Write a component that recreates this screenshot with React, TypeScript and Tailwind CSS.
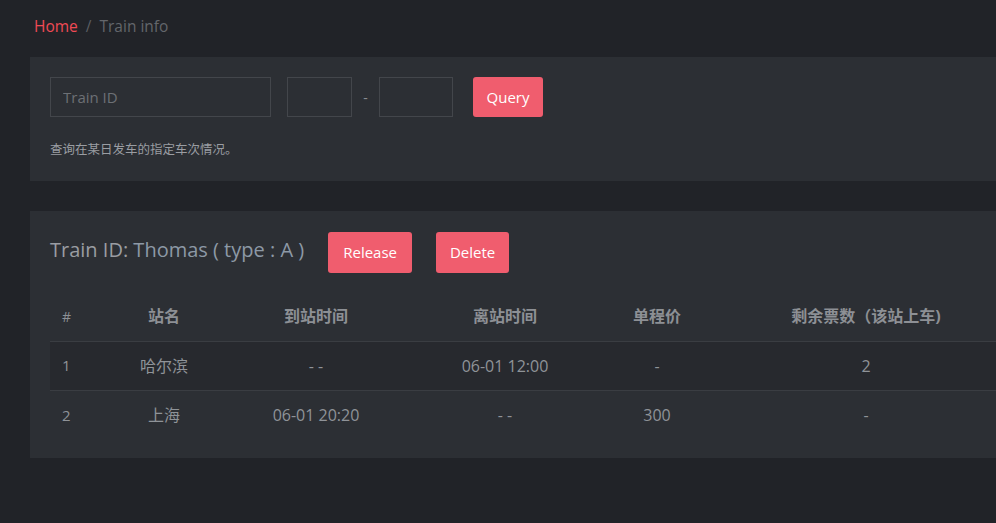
import React from "react";

const rows = [
  { i: "1", name: "哈尔滨", arr: "- -", dep: "06-01 12:00", price: "-", left: "2" },
  { i: "2", name: "上海", arr: "06-01 20:20", dep: "- -", price: "300", left: "-" },
];

export default function App() {
  return (
    <div
      className="w-[996px] h-[523px] overflow-hidden bg-[#212328] text-[#9a9da2]"
      style={{ fontFamily: "'Open Sans', 'Noto Sans CJK SC', sans-serif" }}
    >
      <div className="pl-[30px] w-[1100px]">
        <div className="h-[57px] flex items-center pl-[4px] pb-[3px] text-[15.5px]">
          <span className="text-[#ef4a55]">Home</span>
          <span className="mx-[8px] text-[#5a5d62]">/</span>
          <span className="text-[#63666b]">Train info</span>
        </div>

        <div className="w-[1040px] bg-[#2c2f34] h-[124px] px-[20px] pt-[20px]">
          <div className="flex items-center h-[40px]">
            <input
              placeholder="Train ID"
              className="w-[221px] h-[40px] border border-[#43464b] bg-transparent px-[12px] text-[15px] text-[#9a9da2] placeholder:text-[#6d7075] outline-none"
            />
            <input className="ml-[16px] w-[65px] h-[40px] border border-[#43464b] bg-transparent outline-none" />
            <span className="w-[27px] text-center text-[#8a8d92] text-[14px]">-</span>
            <input className="w-[74px] h-[40px] border border-[#43464b] bg-transparent outline-none" />
            <button className="ml-[20px] w-[70px] h-[40px] rounded-[3px] bg-[#f05d6e] text-white text-[15px]">
              Query
            </button>
          </div>
          <div
            className="mt-[23px] text-[12.5px] text-[#9a9da2]"
            style={{ fontFamily: "'Noto Sans CJK SC', sans-serif" }}
          >
            查询在某日发车的指定车次情况。
          </div>
        </div>

        <div className="mt-[30px] w-[1040px] bg-[#2c2f34] h-[247px] px-[20px] pt-[20px]">
          <div className="flex items-center h-[41px]">
            <span className="text-[20px] -mt-[3px] text-[#9a9da2]">
              Train ID: <span className="text-[#8d99a6]">Thomas ( type : A )</span>
            </span>
            <button className="ml-[24px] mt-[2px] w-[84px] h-[41px] rounded-[3px] bg-[#f05d6e] text-white text-[15px]">
              Release
            </button>
            <button className="ml-[24px] mt-[2px] w-[73px] h-[41px] rounded-[3px] bg-[#f05d6e] text-white text-[15px]">
              Delete
            </button>
          </div>
          <table className="mt-[20px] border-collapse text-[16px] table-fixed w-[974px]">
            <colgroup>
              <col className="w-[50px]" />
              <col className="w-[128px]" />
              <col className="w-[176px]" />
              <col className="w-[202px]" />
              <col className="w-[102px]" />
              <col className="w-[316px]" />
            </colgroup>
            <thead>
              <tr className="h-[49px] border-b border-[#3a3d42] text-[#8d9095] font-bold">
                <th className="text-left pl-[12px] font-normal text-[14px]">#</th>
                <th>站名</th>
                <th>到站时间</th>
                <th>离站时间</th>
                <th>单程价</th>
                <th>剩余票数（该站上车)</th>
              </tr>
            </thead>
            <tbody className="text-[#8f9398]">
              {rows.map((r, idx) => (
                <tr
                  key={r.i}
                  className={
                    idx === 0
                      ? "h-[49px] bg-[#27292e] border-b border-[#3a3d42]"
                      : "h-[49px]"
                  }
                >
                  <td className="pl-[12px] text-[15px]">{r.i}</td>
                  <td className="text-center">{r.name}</td>
                  <td className="text-center">{r.arr}</td>
                  <td className="text-center">{r.dep}</td>
                  <td className="text-center">{r.price}</td>
                  <td className="text-center">{r.left}</td>
                </tr>
              ))}
            </tbody>
          </table>
        </div>
      </div>
    </div>
  );
}
